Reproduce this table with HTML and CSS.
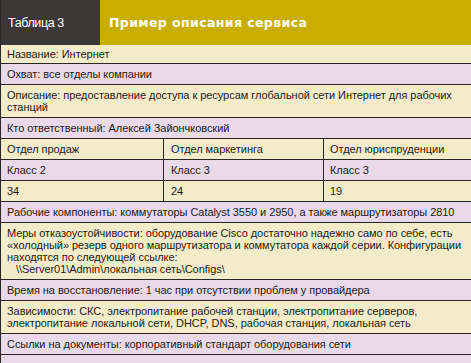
FILE: index.html
```html
<!DOCTYPE html>
<html lang="ru">
<head>
<meta charset="utf-8">
<link rel="stylesheet" href="styles.css">
</head>
<body>
<div class="table">
  <div class="head">
    <div class="head-num">Таблица 3</div>
    <div class="head-title">Пример описания сервиса</div>
  </div>
  <div class="row cream first">Название: Интернет</div>
  <div class="row lilac">Охват: все отделы компании</div>
  <div class="row cream">Описание: предоставление доступа к ресурсам глобальной сети Интернет для рабочих<br>станций</div>
  <div class="row lilac">Кто ответственный: Алексей Зайончковский</div>
  <div class="row cream cols">
    <div class="cell c1">Отдел продаж</div>
    <div class="cell c2">Отдел маркетинга</div>
    <div class="cell c3">Отдел юриспруденции</div>
  </div>
  <div class="row lilac cols">
    <div class="cell c1">Класс 2</div>
    <div class="cell c2">Класс 3</div>
    <div class="cell c3">Класс 3</div>
  </div>
  <div class="row cream cols">
    <div class="cell c1">34</div>
    <div class="cell c2">24</div>
    <div class="cell c3">19</div>
  </div>
  <div class="row lilac">Рабочие компоненты: коммутаторы Catalyst 3550 и 2950, а также маршрутизаторы 2810</div>
  <div class="row cream">Меры отказоустойчивости: оборудование Cisco достаточно надежно само по себе, есть<br>«холодный» резерв одного маршрутизатора и коммутатора каждой серии. Конфигурации<br>находятся по следующей ссылке:<br><span class="path">\\Server01\Admin\локальная сеть\Configs\</span></div>
  <div class="row lilac">Время на восстановление: 1 час при отсутствии проблем у провайдера</div>
  <div class="row cream">Зависимости: СКС, электропитание рабочей станции, электропитание серверов,<br>электропитание локальной сети, DHCP, DNS, рабочая станция, локальная сеть</div>
  <div class="row lilac last">Ссылки на документы: корпоративный стандарт оборудования сети</div>
</div>
</body>
</html>
```
FILE: styles.css
```css
html, body {
  margin: 0;
  padding: 0;
  background: #e9d9e9;
}
.table {
  width: 471px;
  height: 363px;
  overflow: hidden;
  border-left: 1px solid #2a2626;
  box-sizing: border-box;
  font-family: "Liberation Sans", Arial, sans-serif;
  font-size: 11px;
  letter-spacing: -0.05px;
  color: #1e1a1a;
}
.head {
  display: flex;
  height: 45px;
  margin-left: -1px;
}
.head-num {
  width: 100px;
  background: #3c3837;
  color: #fff;
  font-family: "Liberation Sans", sans-serif;
  font-size: 12.5px;
  letter-spacing: -0.4px;
  line-height: 46px;
  padding-left: 8px;
  box-sizing: border-box;
}
.head-title {
  flex: 1;
  background: #c9ad00;
  color: #fff;
  font-family: "DejaVu Sans", sans-serif;
  font-weight: bold;
  font-size: 12.5px;
  letter-spacing: 0.4px;
  line-height: 46px;
  padding-left: 9px;
}
.row {
  border-bottom: 1px solid #2a2626;
  padding: 4px 2px 4px 6px;
  line-height: 12px;
  white-space: nowrap;
}
.row.first {
  padding-top: 3px;
  padding-bottom: 3px;
}
.cream { background: #f3ecca; }
.lilac { background: #e9d9e9; }
.row.cols {
  display: flex;
  padding: 0;
}
.cell {
  padding: 4px 6px 4px 6px;
}
.c1 { width: 163px; border-right: 1px solid #2a2626; box-sizing: border-box; }
.c2 { width: 160px; border-right: 1px solid #2a2626; box-sizing: border-box; padding-left: 7px; }
.c3 { flex: 1; }
.path { padding-left: 9px; }
```
